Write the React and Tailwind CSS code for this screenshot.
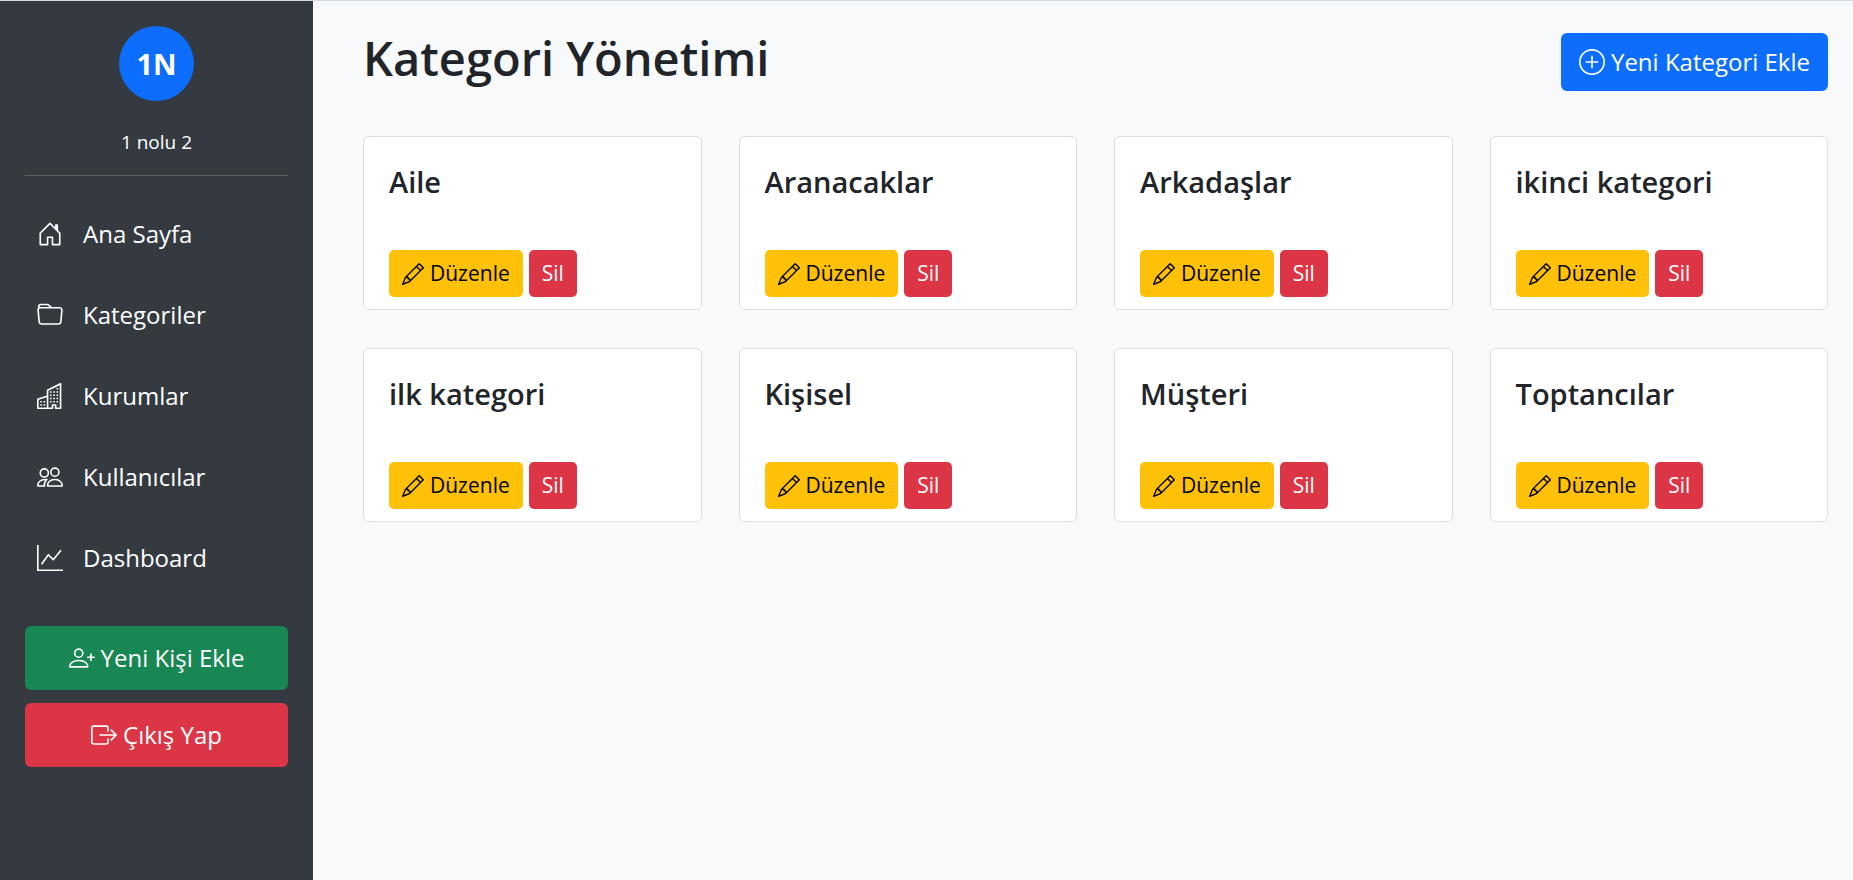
import React from 'react';
import {
  BsBoxArrowRight,
  BsBuildings,
  BsFolder,
  BsGraphUp,
  BsHouseDoor,
  BsPencil,
  BsPeople,
  BsPersonPlus,
  BsPlusCircle,
} from 'react-icons/bs';

const menuItems = [
  { label: 'Ana Sayfa', icon: BsHouseDoor },
  { label: 'Kategoriler', icon: BsFolder },
  { label: 'Kurumlar', icon: BsBuildings },
  { label: 'Kullanıcılar', icon: BsPeople },
  { label: 'Dashboard', icon: BsGraphUp },
];

const categories = [
  'Aile',
  'Aranacaklar',
  'Arkadaşlar',
  'ikinci kategori',
  'ilk kategori',
  'Kişisel',
  'Müşteri',
  'Toptancılar',
];

const Sidebar = () => (
  <aside className="w-[313px] shrink-0 bg-[#343a40] px-[25px] pt-[25px] text-white">
    <div className="flex flex-col items-center border-b border-[#5d6164] pb-[17px]">
      <div className="flex size-[75px] items-center justify-center rounded-full bg-[#0d6efd] text-[29px] font-bold">
        1N
      </div>
      <span className="mt-[25px] text-[19px] leading-[32px]">1 nolu 2</span>
    </div>

    <nav className="mt-[25px] flex flex-col gap-4">
      {menuItems.map(({ label, icon: Icon }) => (
        <a
          key={label}
          href="#"
          className="flex h-[65px] items-center gap-5 rounded-md px-3 text-[24px] hover:bg-[#495057]"
        >
          <Icon className="size-[26px]" />
          {label}
        </a>
      ))}
    </nav>

    <div className="mt-9 flex flex-col gap-[13px]">
      <button className="flex h-16 items-center justify-center gap-[6px] rounded-md bg-[#198754] text-[24px]">
        <BsPersonPlus className="size-[26px]" />
        Yeni Kişi Ekle
      </button>
      <button className="flex h-16 items-center justify-center gap-[6px] rounded-md bg-[#dc3545] text-[24px]">
        <BsBoxArrowRight className="size-[26px]" />
        Çıkış Yap
      </button>
    </div>
  </aside>
);

const CategoryCard = ({ name }) => (
  <div className="rounded-md border border-[#dedfe0] bg-white px-[25px] pt-[25px] pb-3">
    <h2 className="text-[29px] leading-[40px] font-semibold">{name}</h2>
    <div className="mt-12 flex gap-[6px]">
      <button className="flex h-[47px] items-center gap-[6px] rounded-[5px] bg-[#ffc107] px-[13px] text-[21px] text-black">
        <BsPencil className="size-[22px]" />
        Düzenle
      </button>
      <button className="h-[47px] rounded-[5px] bg-[#dc3545] px-[13px] text-[21px] text-white">
        Sil
      </button>
    </div>
  </div>
);

const App = () => (
  <div className="flex min-h-screen border-t border-[#d5dee8] bg-[#f8f9fb] font-['Open_Sans','Noto_Sans',sans-serif] text-[#212529]">
    <Sidebar />
    <main className="flex-1 pt-[25px] pr-[25px] pl-[50px]">
      <div className="flex items-end justify-between">
        <h1 className="text-[47px] leading-[65px] font-semibold">Kategori Yönetimi</h1>
        <button className="flex h-[58px] items-center gap-[6px] rounded-md bg-[#0d6efd] px-[18px] text-[24px] text-white">
          <BsPlusCircle className="size-[26px]" />
          Yeni Kategori Ekle
        </button>
      </div>

      <div className="mt-[45px] grid grid-cols-4 gap-x-[37px] gap-y-[38px]">
        {categories.map((name) => (
          <CategoryCard key={name} name={name} />
        ))}
      </div>
    </main>
  </div>
);

export default App;
